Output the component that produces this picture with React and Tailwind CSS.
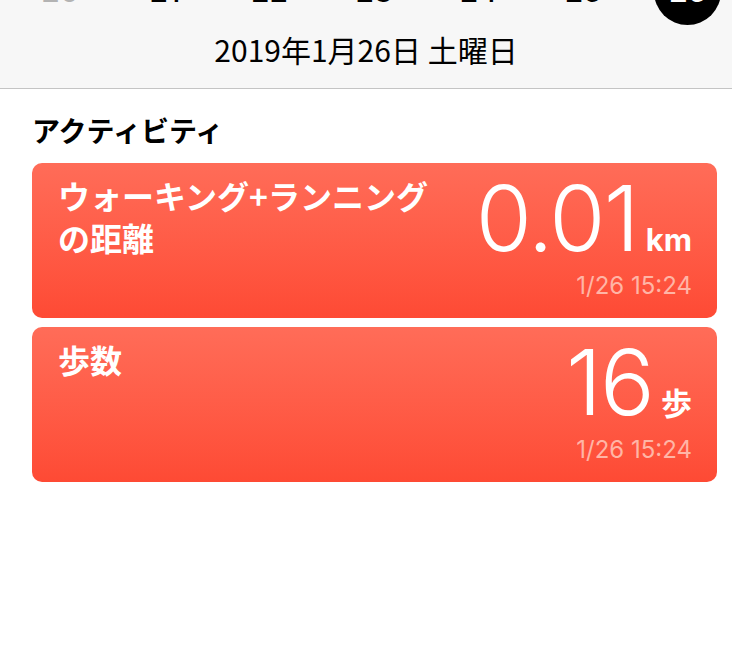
const DAYS = [20, 21, 22, 23, 24, 25, 26]

const jp = { fontFamily: '"Noto Sans CJK JP", "Noto Sans", sans-serif' }
const num = { fontFamily: 'Inter, "Noto Sans", sans-serif' }

function DayStrip() {
  return (
    <div className="flex pl-[8px] mt-[-42px]" style={num}>
      {DAYS.map((d, i) => (
        <div key={d} className="w-[104.6px] shrink-0 flex justify-center">
          {d === 26 ? (
            <div className="w-[67px] h-[67px] rounded-full bg-black text-white flex items-center justify-center text-[30px] font-semibold">
              {d}
            </div>
          ) : (
            <div
              className={`h-[67px] flex items-center text-[30px] font-medium ${
                i === 0 ? 'text-[#b3b3b3]' : 'text-black'
              }`}
            >
              {d}
            </div>
          )}
        </div>
      ))}
    </div>
  )
}

function MetricCard({ title, value, unit, time }) {
  return (
    <div className="rounded-[10px] bg-linear-to-b from-[#ff6c58] to-[#fe4a34] h-[155px] flex justify-between pl-[26px] pr-[25px]">
      <div className="pt-[11px] text-white font-bold text-[32px] leading-[42px]" style={jp}>
        {title.map((line, i) => (
          <div key={i}>{line}</div>
        ))}
      </div>
      <div className="flex flex-col items-end pt-[10px]" style={num}>
        <div className="flex items-baseline text-white">
          <span className="text-[91px] font-light leading-none tracking-[-0.02em]">{value}</span>
          <span className="text-[31px] font-bold leading-none ml-[8px]" style={unit === 'km' ? undefined : jp}>
            {unit}
          </span>
        </div>
        <div className="mt-[10px] text-[24px] leading-none text-[#ffb5a6]">{time}</div>
      </div>
    </div>
  )
}

export default function App() {
  return (
    <div className="w-[732px] h-[666px] bg-white overflow-hidden">
      <div className="bg-[#f7f7f7] h-[89px] border-b border-[#c4c4c4] overflow-hidden">
        <DayStrip />
        <div className="text-center text-[30px] text-black mt-[6px] leading-[36px]" style={jp}>
          2019年1月26日 土曜日
        </div>
      </div>
      <div className="pl-[32px] pr-[15px]">
        <h2 className="mt-[26px] mb-[18px] text-[28px] font-bold leading-[30px] text-black" style={jp}>
          アクティビティ
        </h2>
        <div className="flex flex-col gap-[9px]">
          <MetricCard title={['ウォーキング+ランニング', 'の距離']} value="0.01" unit="km" time="1/26 15:24" />
          <MetricCard title={['歩数']} value="16" unit="歩" time="1/26 15:24" />
        </div>
      </div>
    </div>
  )
}
